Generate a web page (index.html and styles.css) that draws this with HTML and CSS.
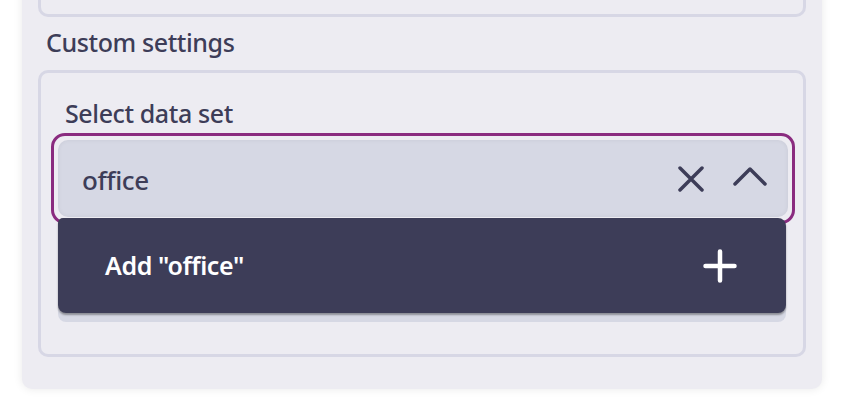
FILE: index.html
```html
<!DOCTYPE html>
<html lang="en">
<head>
<meta charset="utf-8">
<title>Custom settings</title>
<link rel="stylesheet" href="styles.css">
</head>
<body>
<div class="panel">
  <div class="top-box"></div>
  <div class="heading">Custom settings</div>
  <div class="group">
    <div class="label">Select data set</div>
    <div class="select">
      <div class="input">
        <span class="value">office</span>
        <span class="icons">
          <svg class="icon-x" width="26" height="26" viewBox="0 0 26 26"><path d="M2 2 L24 24 M24 2 L2 24" stroke="#3d3d58" stroke-width="3.5" stroke-linecap="round" fill="none"/></svg>
          <svg class="icon-chev" width="34" height="20" viewBox="0 0 34 20"><path d="M2 18 L17 3 L32 18" stroke="#3d3d58" stroke-width="3.5" stroke-linecap="round" stroke-linejoin="round" fill="none"/></svg>
        </span>
      </div>
      <div class="menu">
        <span class="option">Add "office"</span>
        <svg class="icon-plus" width="34" height="34" viewBox="0 0 34 34"><path d="M17 2.5 L17 31.5 M2.5 17 L31.5 17" stroke="#ffffff" stroke-width="4.5" stroke-linecap="round" fill="none"/></svg>
      </div>
    </div>
  </div>
</div>
</body>
</html>
```

FILE: styles.css
```css
* { box-sizing: border-box; }
html, body {
  margin: 0;
  padding: 0;
  background: #ffffff;
  font-family: "Noto Sans", "Open Sans", sans-serif;
  color: #3d3d58;
}
body { height: 400px; overflow: hidden; }

.panel {
  margin: -40px 0 0 22px;
  width: 800px;
  background: #edecf2;
  border-radius: 10px;
  box-shadow: 0 0 10px rgba(0, 0, 0, 0.09);
  padding: 0 16px 32px 16px;
}

.top-box {
  height: 57px;
  border: 3px solid #d7d7e5;
  border-top: none;
  border-radius: 0 0 10px 10px;
}

.heading {
  height: 53px;
  line-height: 50px;
  font-size: 25px;
  font-weight: 500;
  padding-left: 8px;
  letter-spacing: -0.4px;
}

.group {
  height: 287px;
  border: 3px solid #d7d7e5;
  border-radius: 10px;
  padding: 24px 8px 0 10px;
}

.label {
  height: 36px;
  line-height: 32px;
  font-size: 25px;
  font-weight: 500;
  padding-left: 14px;
  letter-spacing: -0.4px;
}

.select {
  position: relative;
  height: 91px;
  border: 3px solid #8a2b7f;
  border-radius: 14px;
  padding: 4px;
}

.input {
  height: 77px;
  background: #d6d8e4;
  border-radius: 10px;
  box-shadow: inset 0 0 5px rgba(0, 0, 0, 0.06);
  display: flex;
  align-items: center;
  justify-content: space-between;
  padding: 0 21px 0 24px;
}

.value {
  font-size: 26px;
  font-weight: 500;
  letter-spacing: -0.4px;
  margin-top: 2px;
}

.icons {
  display: flex;
  align-items: center;
  gap: 29px;
}
.icons svg { display: block; }
.icon-chev { margin-top: -6px; }

.menu {
  position: absolute;
  top: 82px;
  left: 4px;
  width: 728px;
  height: 95px;
  background: #3d3d58;
  border-radius: 5px 8px 8px 8px;
  box-shadow: 0 2px 2px rgba(0, 0, 0, 0.35), 0 9px 0 #d6d8e4;
  display: flex;
  align-items: center;
  justify-content: space-between;
  padding: 0 49px 0 47px;
}

.option {
  color: #ffffff;
  font-size: 25px;
  font-weight: 600;
  letter-spacing: -0.4px;
  margin-top: -2px;
}
.icon-plus { display: block; }
```
